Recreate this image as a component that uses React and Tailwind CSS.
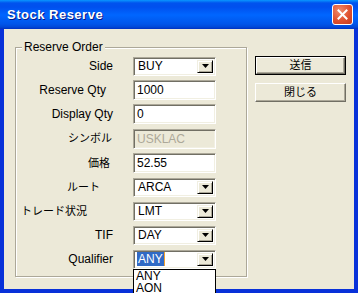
import React from 'react';

const rows = [
    { label: 'Side', kind: 'combo', value: 'BUY', h: 'h-[24px]', pr: 'pr-0' },
    { label: 'Reserve Qty', kind: 'edit', value: '1000', h: 'h-[24px]', pr: 'pr-[7px]' },
    { label: 'Display Qty', kind: 'edit', value: '0', h: 'h-[24px]', pr: 'pr-0' },
    { label: 'シンボル', kind: 'disabled', value: 'USKLAC', h: 'h-[25px]', pr: 'pr-[1px]', jp: true },
    { label: '価格', kind: 'edit', value: '52.55', h: 'h-[24px]', pr: 'pr-[3px]', jp: true },
    { label: 'ルート', kind: 'combo', value: 'ARCA', h: 'h-[24px]', pr: 'pr-[13px]', jp: true },
    { label: 'トレード状況', kind: 'combo', value: 'LMT', h: 'h-[24px]', pr: 'pr-[26px]', jp: true },
    { label: 'TIF', kind: 'combo', value: 'DAY', h: 'h-[24px]', pr: 'pr-0' },
    { label: 'Qualifier', kind: 'open', value: 'ANY', h: 'h-[24px]', pr: 'pr-0' },
];

const ui = '"Liberation Sans", "Noto Sans CJK JP", sans-serif';

// sunken 3D frame used by edits and combos
const sunken = 'border border-t-[#aca899] border-l-[#aca899] border-r-white border-b-white shadow-[inset_1px_1px_0_#716f64,inset_-1px_-1px_0_#f1efe2]';

const DropArrow = () => (
    <div className="w-[16px] h-full flex items-center justify-center bg-[#ece9d8] border border-t-[#f1efe2] border-l-[#f1efe2] border-r-black border-b-black shadow-[inset_1px_1px_0_#fff,inset_-1px_-1px_0_#aca899]">
        <svg width="7" height="4" viewBox="0 0 7 4">
            <path d="M0 0h7L3.5 4z" fill="#000" />
        </svg>
    </div>
);

const Field = ({ kind, value }) => {
    if (kind === 'combo' || kind === 'open') {
        return (
            <div className="relative">
                <div className={`w-[83px] h-[19px] bg-white flex items-stretch p-[2px] ${sunken}`}>
                    <div className="flex-1 flex items-center pl-[1px] text-[12px] text-black leading-none">
                        {kind === 'open' ? (
                            <span className="bg-[#316ac5] text-white px-[1px] py-[1px] border-r border-[#f0a030]">{value}</span>
                        ) : (
                            <span className="pl-[1px]">{value}</span>
                        )}
                    </div>
                    <DropArrow />
                </div>
                {kind === 'open' && (
                    <div className="absolute left-0 top-full w-[83px] bg-white border border-black text-[12px] leading-[12px] text-black pl-[2px] z-10">
                        <div>ANY</div>
                        <div>AON</div>
                    </div>
                )}
            </div>
        );
    }
    return (
        <div className={`w-[83px] h-[20px] flex items-center pl-[3px] text-[12px] leading-none ${sunken} ${kind === 'disabled' ? 'bg-[#ece9d8] text-[#aca899]' : 'bg-white text-black'}`}>
            {value}
        </div>
    );
};

const Button = ({ children, isDefault }) => (
    <div className={`w-[91px] h-[19px] flex items-center justify-center bg-[#ece9d8] text-[11px] text-black ${isDefault ? 'border border-black' : ''}`}>
        <div className="w-full h-full flex items-center justify-center border border-t-white border-l-white border-r-[#716f64] border-b-[#716f64] shadow-[inset_-1px_-1px_0_#aca899]">
            {children}
        </div>
    </div>
);

export default function App() {
    return (
        <div className="w-[358px] h-[293px] flex flex-col bg-[#0831d9] overflow-hidden" style={{ fontFamily: ui }}>
            {/* Title bar */}
            <div className="h-[29px] shrink-0 flex items-center justify-between pl-[7px] pr-[5px] bg-[linear-gradient(to_bottom,#0997ff_0px,#0053ee_3px,#0050ee_7px,#0066ff_15px,#0055ea_24px,#0048d8_27px,#0030c0_29px)]">
                <span className="text-white font-bold text-[13px] tracking-[0.5px] [text-shadow:1px_1px_0_#0a1883]">
                    Stock Reserve
                </span>
                <div className="w-[21px] h-[21px] rounded-[3px] border border-white bg-[radial-gradient(circle_at_35%_30%,#f08c6c,#e0512f_55%,#c43a1e)] flex items-center justify-center">
                    <svg width="11" height="11" viewBox="0 0 11 11">
                        <path d="M1.5 1.5l8 8M9.5 1.5l-8 8" stroke="#fff" strokeWidth="2" strokeLinecap="square" />
                    </svg>
                </div>
            </div>

            {/* Body */}
            <div className="flex-1 mx-[4px] mb-[4px] bg-[#ece9d8] flex items-start">
                {/* Group box */}
                <div className="relative ml-[11px] mt-[18px] w-[232px] h-[230px] border border-[#aca899] shadow-[1px_1px_0_#fff,inset_1px_1px_0_#fff] pt-[6px]">
                    <span className="absolute left-[6px] top-[-8px] px-[2px] bg-[#ece9d8] text-[12px] leading-[14px] text-black">
                        Reserve Order
                    </span>
                    {rows.map((r) => (
                        <div key={r.label} className={`flex items-center ${r.h}`}>
                            <div className={`w-[97px] text-right text-black whitespace-nowrap ${r.jp ? 'text-[11px]' : 'text-[12px]'} ${r.pr}`}>{r.label}</div>
                            <div className="ml-[20px]">
                                <Field kind={r.kind} value={r.value} />
                            </div>
                        </div>
                    ))}
                </div>

                {/* Buttons */}
                <div className="ml-[8px] mt-[27px] flex flex-col gap-[8px]">
                    <Button isDefault>送信</Button>
                    <Button>閉じる</Button>
                </div>
            </div>
        </div>
    );
}
